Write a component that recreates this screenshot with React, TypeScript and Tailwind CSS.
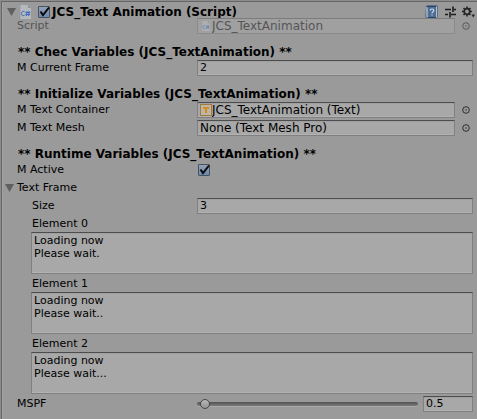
import { useState, type ReactNode } from "react";

const FIELD =
  "min-w-0 border border-[#808080] border-t-[#4d4d4d] bg-[#a8a8a8] shadow-[inset_0_1px_0_#a0a0a0,inset_0_-1px_0_#b2b2b2] outline-none";

function Foldout({ label }: { label: string }) {
  return (
    <button type="button" aria-label={label} className="flex h-4 w-[9px] shrink-0 items-center">
      <svg viewBox="0 0 9 8" className="h-2 w-[9px]" fill="#5f5f5f">
        <path d="M0 0H9L4.5 8Z" />
      </svg>
    </button>
  );
}

function ScriptIcon({ small = false }: { small?: boolean }) {
  return (
    <svg viewBox="0 0 11 14" className={small ? "h-[10px] w-2 opacity-60" : "h-[14px] w-[11px]"}>
      <path d="M.5 0H8l3 3v11H.5Z" fill="#b4b9bd" />
      <path d="M8 0v3h3Z" fill="#8d9194" />
      <path
        d="M4.600 6.800C3.900 6 1.400 6.100 1.400 8.500s2.400 2.600 3.300 1.700M7 6 6.500 11M9.200 6 8.700 11M5.600 7.500h4.700M5.400 9.500h4.700"
        fill="none"
        stroke="#3f68bd"
        strokeWidth="1"
      />
    </svg>
  );
}

function TextIcon() {
  return (
    <svg viewBox="0 0 12 12" className="h-3 w-3">
      <rect x=".5" y=".5" width="11" height="11" fill="#bcb5a9" stroke="#a37a3c" />
      <path d="M3 3h6v2H8V4.500H7V9H5V4.500H4V5H3Z" fill="#d88a12" />
    </svg>
  );
}

function Picker({ label, disabled = false }: { label: string; disabled?: boolean }) {
  return (
    <button
      type="button"
      disabled={disabled}
      aria-label={label}
      className="flex h-4 w-[18px] shrink-0 items-center justify-center pl-1 disabled:opacity-60"
    >
      <svg viewBox="0 0 8 8" className="h-2 w-2">
        <circle cx="4" cy="4" r="3.300" fill="none" stroke="#222" strokeWidth=".9" />
        <circle cx="4" cy="4" r=".7" fill="#222" />
      </svg>
    </button>
  );
}

function Check({ id, label }: { id?: string; label?: string }) {
  return (
    <span className="relative flex size-[14px] shrink-0">
      <input
        id={id}
        aria-label={label}
        type="checkbox"
        defaultChecked
        className="peer m-px size-3 appearance-none rounded-[1px] border border-[#46525f] bg-linear-to-b from-[#92a1b5] to-[#6b89b0]"
      />
      <svg
        viewBox="0 0 14 14"
        className="pointer-events-none absolute inset-0 hidden peer-checked:block"
        fill="none"
        stroke="#080808"
        strokeWidth="2"
      >
        <path d="M3.500 6.500 6 10 12 2.500" />
      </svg>
    </span>
  );
}

function Heading({ children }: { children: ReactNode }) {
  return <h2 className="mt-2 -mb-0.5 h-4 pl-px text-[12px] font-bold whitespace-nowrap">{children}</h2>;
}

function Row({
  id,
  label,
  nested = false,
  children,
}: {
  id: string;
  label: string;
  nested?: boolean;
  children: ReactNode;
}) {
  return (
    <div className="flex h-4">
      <label htmlFor={id} className={`w-[180px] shrink-0 whitespace-nowrap ${nested ? "pl-[15px]" : ""}`}>
        {label}
      </label>
      <div className="flex min-w-0 flex-1">{children}</div>
    </div>
  );
}

function ObjectField({
  id,
  value,
  icon,
  disabled = false,
}: {
  id: string;
  value: string;
  icon?: ReactNode;
  disabled?: boolean;
}) {
  return (
    <>
      <div
        className={`flex flex-1 items-center pl-0.5 ${
          disabled ? "min-w-0 border border-[#8b8b8b] border-t-[#7c7c7c] bg-[#a0a0a0]" : FIELD
        }`}
      >
        {icon && <span className="flex w-3 shrink-0 justify-center">{icon}</span>}
        <input
          id={id}
          readOnly
          disabled={disabled}
          value={value}
          className="h-[14px] min-w-0 flex-1 bg-transparent text-[12px] leading-[14px] outline-none disabled:text-[#555]"
        />
      </div>
      <Picker label={`Select ${value}`} disabled={disabled} />
    </>
  );
}

const FRAMES = ["Loading now\nPlease wait.", "Loading now\nPlease wait..", "Loading now\nPlease wait..."];

export default function App() {
  const [mspf, setMspf] = useState("0.5");

  return (
    <div className="bg-[#8c8c8c] pt-px pl-px font-['DejaVu_Sans',Verdana,sans-serif] text-[11px] leading-4 text-black">
      <main className="border-t border-l border-[#666] bg-[#9a9a9a] pr-1 pb-[7px] pl-[15px] shadow-[inset_1px_0_0_#a3a3a3]">
        <header className="-mr-1 -ml-[10px] flex h-4 items-center pt-[3px]">
          <Foldout label="Toggle component" />
          <span className="ml-1 shrink-0">
            <ScriptIcon />
          </span>
          <span className="ml-[6px] flex">
            <Check label="Enable component" />
          </span>
          <h1 className="ml-px flex-1 text-[12px] font-bold whitespace-nowrap">JCS_Text Animation (Script)</h1>
          <button type="button" aria-label="Help" className="shrink-0">
            <svg viewBox="0 0 13 14" className="h-[14px] w-[13px]">
              <path d="M1 1 3 .500H12.500V12L11 13.500H2L.500 12Z" fill="#2d4464" />
              <path d="M1 1.500 3 2.500V13L1 12Z" fill="#91a5bf" />
              <path d="M3 2H11V12H3Z" fill="#506f98" />
              <path d="M11 2 12 1V12L11 13Z" fill="#b6c0cc" />
              <path
                d="M5.200 5.500C5.200 3.500 8.800 3.500 8.800 5.500 8.800 6.800 7 6.700 7 8.300M7 9.400V10.600"
                fill="none"
                stroke="#d5dde7"
                strokeWidth="1.100"
              />
            </svg>
          </button>
          <button type="button" aria-label="Presets" className="ml-[7px] shrink-0">
            <svg viewBox="0 0 11 12" className="h-3 w-[11px]" fill="none" stroke="#1c1c1c" strokeWidth="1.600">
              <path d="M0 3.500H6M9 3.500H11M8 .500V6M0 8.500H3M6 8.500H11M5 6V11.500" />
            </svg>
          </button>
          <button type="button" aria-label="Component menu" className="mr-0.5 ml-[6px] shrink-0">
            <svg viewBox="0 0 13 12" className="h-3 w-[13px]">
              <circle cx="5" cy="5.500" r="2.800" fill="none" stroke="#252525" strokeWidth="1.800" />
              <path
                d="M5 .500V2.500M5 8.500V10.500M0 5.500H2M8 5.500H10M1.500 2 3 3.500M7 7.500 8.500 9M8.500 2 7 3.500M3 7.500 1.500 9"
                stroke="#252525"
                strokeWidth="1.600"
              />
              <path d="M9.500 8.500H13L11.200 11.500Z" fill="#252525" />
            </svg>
          </button>
        </header>

        <div className="flex flex-col gap-0.5">
          <div className="text-[#555]">
            <Row id="script" label="Script">
              <ObjectField id="script" value="JCS_TextAnimation" icon={<ScriptIcon small />} disabled />
            </Row>
          </div>

          <Heading>** Chec Variables (JCS_TextAnimation) **</Heading>
          <Row id="current" label="M Current Frame">
            <input id="current" defaultValue="2" className={`${FIELD} flex-1 px-[2px]`} />
          </Row>

          <Heading>** Initialize Variables (JCS_TextAnimation) **</Heading>
          <Row id="container" label="M Text Container">
            <ObjectField id="container" value="JCS_TextAnimation (Text)" icon={<TextIcon />} />
          </Row>
          <Row id="mesh" label="M Text Mesh">
            <ObjectField id="mesh" value="None (Text Mesh Pro)" />
          </Row>

          <Heading>** Runtime Variables (JCS_TextAnimation) **</Heading>
          <Row id="active" label="M Active">
            <span className="flex items-center">
              <Check id="active" />
            </span>
          </Row>

          <div className="-ml-3 flex h-4">
            <Foldout label="Toggle Text Frame" />
            <span className="ml-[3px]">Text Frame</span>
          </div>
          <Row id="size" label="Size" nested>
            <input id="size" defaultValue={FRAMES.length} className={`${FIELD} flex-1 px-[2px]`} />
          </Row>
          {FRAMES.map((frame, i) => (
            <div key={i} className="flex flex-col pl-[14px]">
              <label htmlFor={`element-${i}`} className="h-4 pl-px">
                Element {i}
              </label>
              <textarea
                id={`element-${i}`}
                defaultValue={frame}
                className={`${FIELD} h-[42px] resize-none overflow-hidden px-[2px] pt-px leading-[13px]`}
              />
            </div>
          ))}

          <Row id="mspf" label="MSPF">
            <input
              id="mspf"
              type="range"
              min="0"
              max="40"
              step="0.1"
              value={mspf}
              onChange={(e) => setMspf(e.target.value)}
              className="h-4 min-w-0 flex-1 appearance-none bg-transparent [&::-webkit-slider-runnable-track]:h-1 [&::-webkit-slider-runnable-track]:rounded-full [&::-webkit-slider-runnable-track]:bg-linear-to-b [&::-webkit-slider-runnable-track]:from-[#525252] [&::-webkit-slider-runnable-track]:to-[#7b7b7b] [&::-webkit-slider-runnable-track]:shadow-[0_1px_0_#aaa] [&::-webkit-slider-thumb]:-mt-[3px] [&::-webkit-slider-thumb]:size-[10px] [&::-webkit-slider-thumb]:appearance-none [&::-webkit-slider-thumb]:rounded-full [&::-webkit-slider-thumb]:border [&::-webkit-slider-thumb]:border-[#484848] [&::-webkit-slider-thumb]:bg-linear-to-b [&::-webkit-slider-thumb]:from-[#b8b8b8] [&::-webkit-slider-thumb]:to-[#929292]"
            />
            <input
              aria-label="MSPF value"
              value={mspf}
              onChange={(e) => setMspf(e.target.value)}
              className={`${FIELD} ml-[5px] w-[50px] px-[2px]`}
            />
          </Row>
        </div>
      </main>
    </div>
  );
}
